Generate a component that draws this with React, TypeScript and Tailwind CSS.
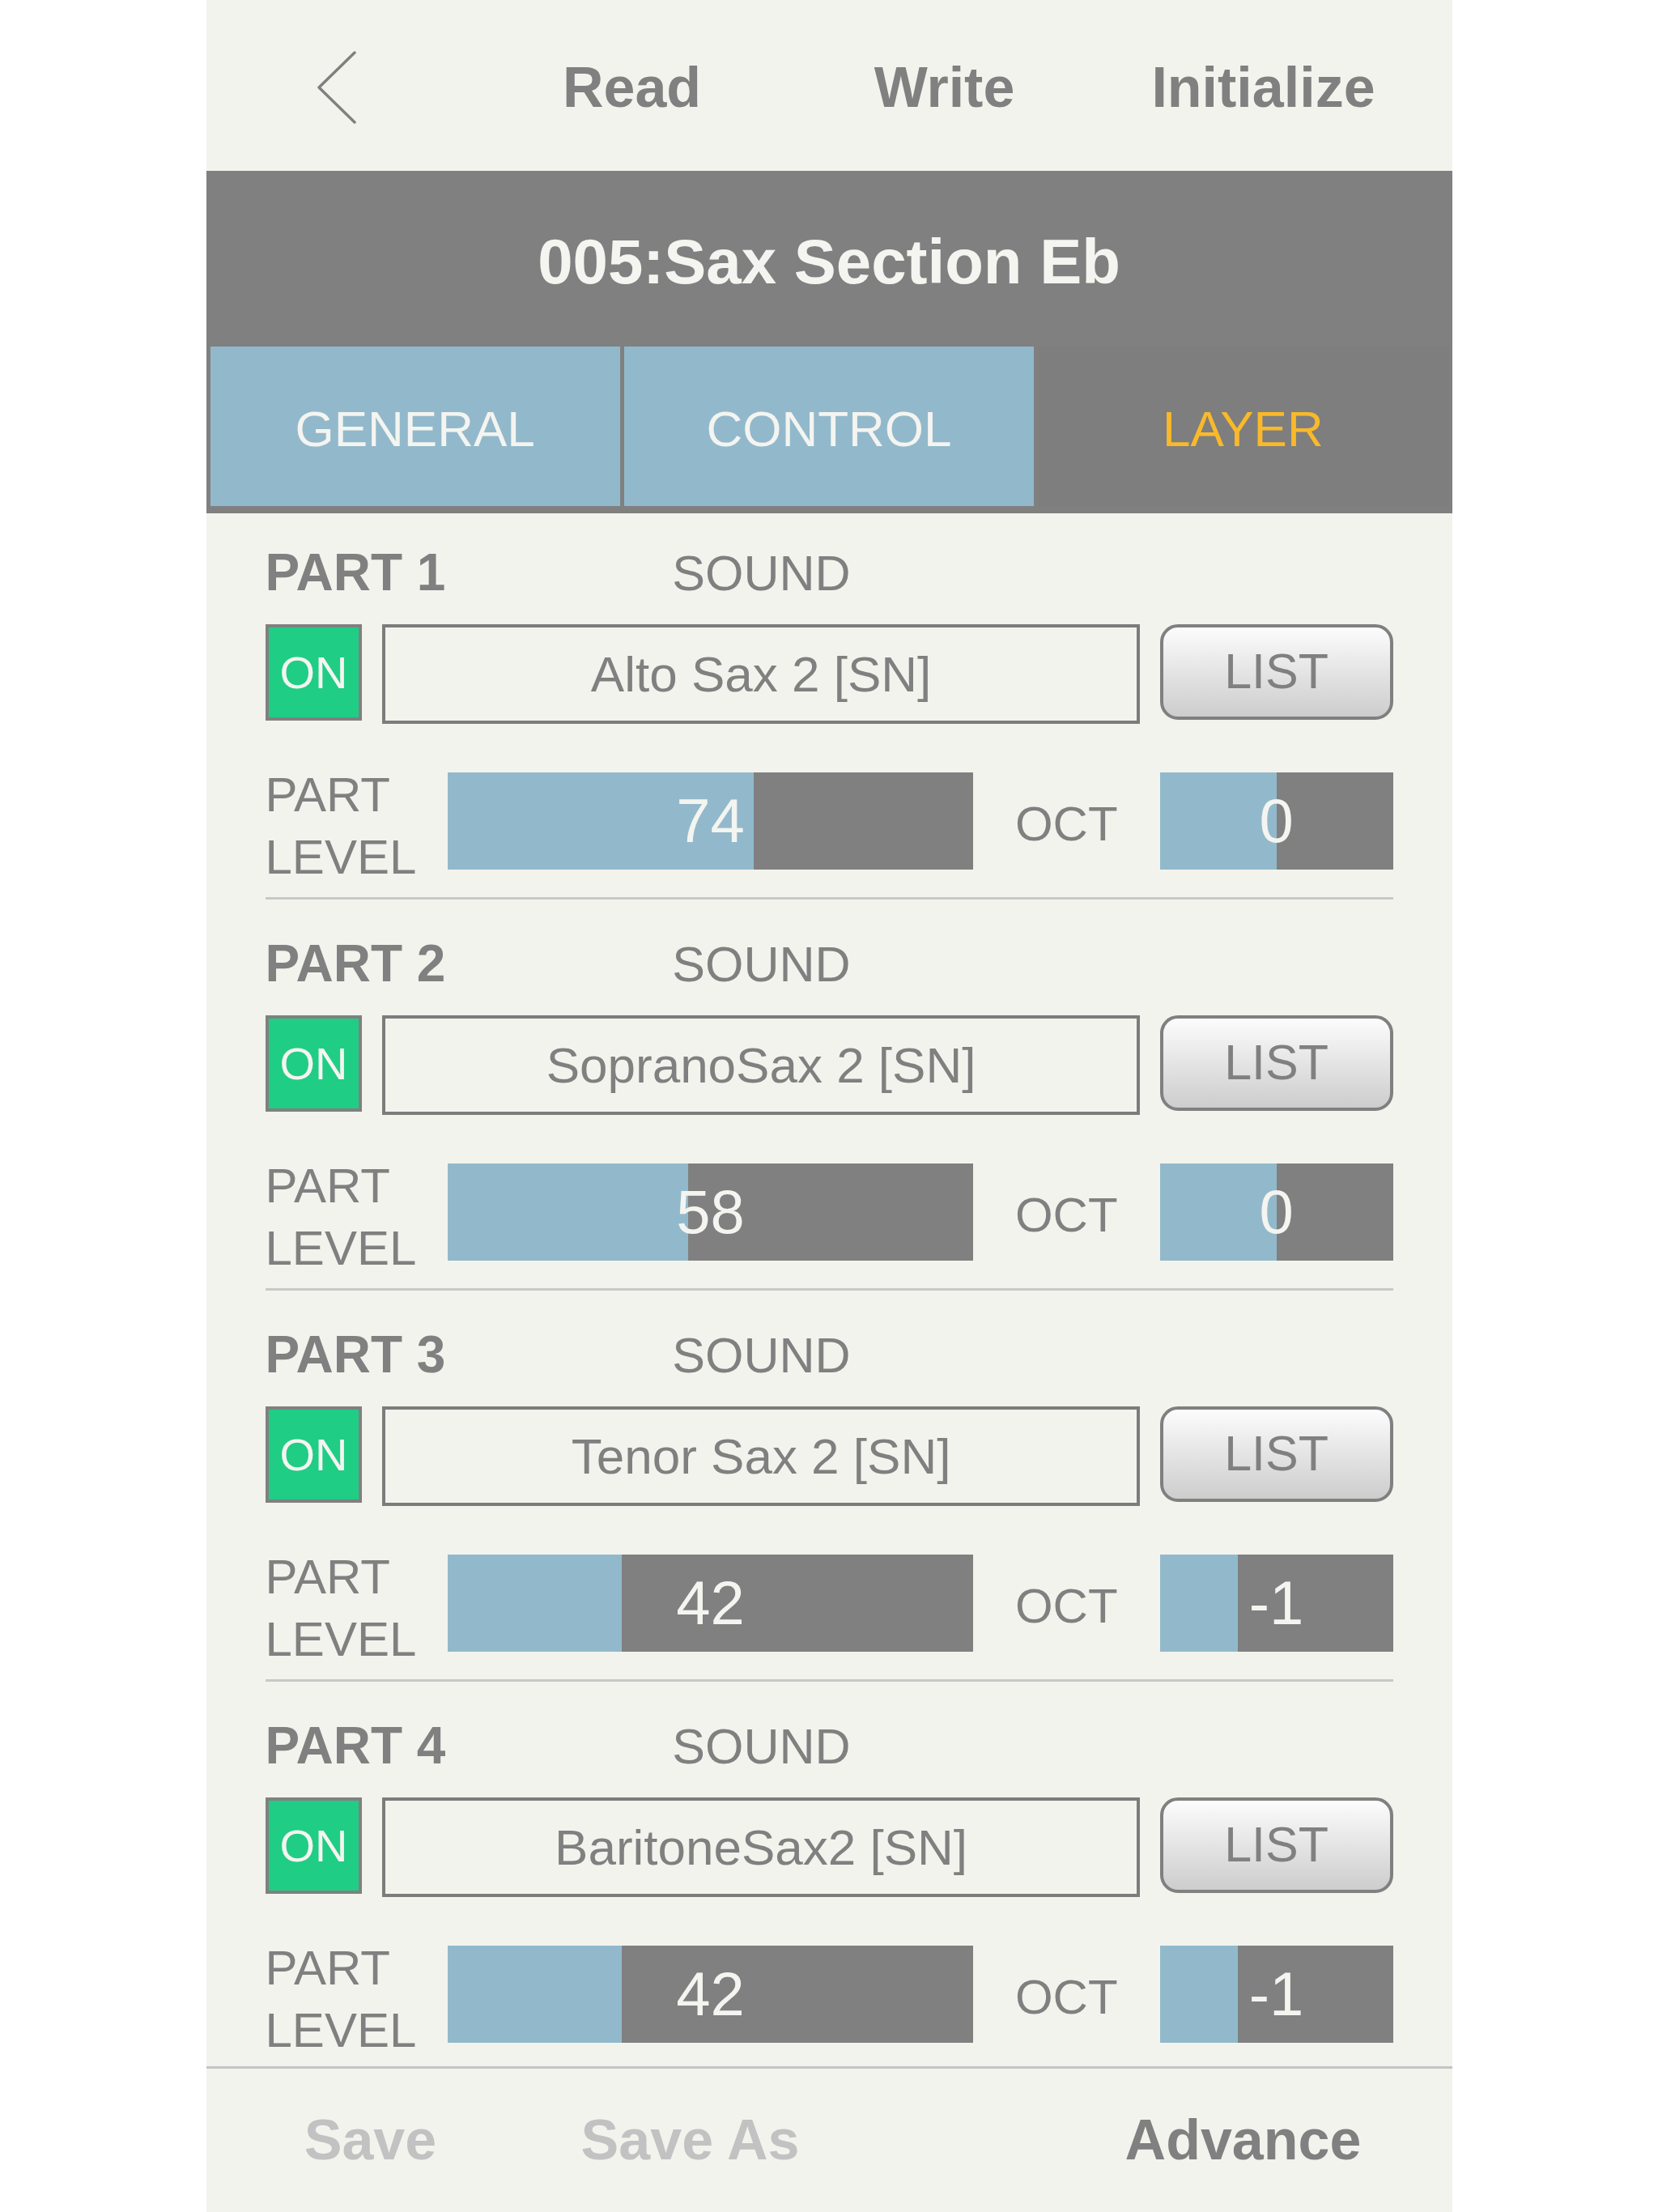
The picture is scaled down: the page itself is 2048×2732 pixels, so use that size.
import React from "react";

interface Part {
  n: number;
  name: string;
  level: number;
  oct: number;
}

const parts: Part[] = [
  { n: 1, name: "Alto Sax 2 [SN]", level: 74, oct: 0 },
  { n: 2, name: "SopranoSax 2 [SN]", level: 58, oct: 0 },
  { n: 3, name: "Tenor Sax 2 [SN]", level: 42, oct: -1 },
  { n: 4, name: "BaritoneSax2 [SN]", level: 42, oct: -1 },
];

function TopNav() {
  return (
    <div className="flex h-[211px] items-center pt-[5px] text-[70px] font-bold text-[#808080]">
      <div className="w-[376px] pl-[137px]">
        <svg width="48" height="90" viewBox="0 0 48 90" fill="none">
          <polyline points="46,2 2,45 46,88" stroke="#808080" strokeWidth="3.5" strokeLinecap="round" strokeLinejoin="round" />
        </svg>
      </div>
      <div className="w-[300px] text-center">Read</div>
      <div className="ml-[86px] w-[300px] text-center">Write</div>
      <div className="ml-[94px] w-[300px] text-center">Initialize</div>
    </div>
  );
}

function Tabs() {
  const tabs = ["GENERAL", "CONTROL", "LAYER"];
  return (
    <div className="grid h-[207px] grid-cols-3 gap-[5px] bg-[#808080] px-[5px] pt-[1px] pb-[9px]">
      {tabs.map((t) => {
        const active = t === "LAYER";
        return (
          <div
            key={t}
            className={
              active
                ? "flex items-center justify-center bg-[#7e7e7e] pt-[6px] text-[62px] text-[#f9b92a]"
                : "flex items-center justify-center bg-[#92b9cb] pt-[6px] text-[62px] text-[#f4f4f0]"
            }
          >
            {t}
          </div>
        );
      })}
    </div>
  );
}

function ValueBar({ width, fill, value }: { width: string; fill: number; value: number }) {
  return (
    <div className={`relative h-full bg-[#808080] ${width}`}>
      <div className="h-full bg-[#92b9cb]" style={{ width: `${fill * 100}%` }} />
      <div className="absolute inset-0 flex items-center justify-center text-[76px] text-[#f4f4f0]">
        {value}
      </div>
    </div>
  );
}

function PartBlock({ part, last }: { part: Part; last: boolean }) {
  return (
    <div className={last ? "" : "mb-[44px] border-b-[3px] border-[#c8c8c8] pb-[34px]"}>
      {/* label row */}
      <div className="flex h-[70px] items-baseline leading-[70px] text-[#808080]">
        <div className="w-[145px] whitespace-nowrap text-[64px] font-bold">PART {part.n}</div>
        <div className="w-[936px] text-center text-[61px]">SOUND</div>
      </div>

      {/* sound row */}
      <div className="mt-[29px] flex h-[123px] items-start gap-[25px]">
        <div className="flex h-[119px] w-[120px] items-center justify-center border-[4px] border-[#808080] bg-[#20cd85] text-[56px] leading-none text-[#f4f4f0]">
          ON
        </div>
        <div className="flex h-[123px] w-[936px] items-center justify-center border-[4px] border-[#7c7c7c] text-[62px] text-[#808080]">
          {part.name}
        </div>
        <div className="flex h-[118px] w-[288px] items-center justify-center rounded-[22px] border-[4px] border-[#808080] bg-linear-to-b from-[#fcfcfc] to-[#cdcdcd] text-[61px] text-[#808080]">
          LIST
        </div>
      </div>

      {/* level row */}
      <div className="mt-[60px] flex h-[120px] items-start">
        <div className="-mt-[11px] w-[226px] text-[60px] leading-[77px] text-[#808080]">
          PART
          <br />
          LEVEL
        </div>
        <ValueBar width="w-[649px]" fill={part.level / 127} value={part.level} />
        <div className="w-[231px] self-center pt-[8px] text-center text-[60px] text-[#808080]">OCT</div>
        <ValueBar width="w-[288px]" fill={(part.oct + 3) / 6} value={part.oct} />
      </div>
    </div>
  );
}

function Footer() {
  return (
    <div className="flex h-[177px] items-center text-[70px] font-bold">
      <div className="ml-[53px] w-[300px] text-center text-[#c2c2c2]">Save</div>
      <div className="ml-[95px] w-[300px] text-center text-[#c2c2c2]">Save As</div>
      <div className="ml-[383px] w-[300px] text-center text-[#808080]">Advance</div>
    </div>
  );
}

export default function App() {
  return (
    <div className="min-h-screen bg-white font-['Liberation_Sans',Arial,sans-serif]">
      <div className="mx-auto flex h-[2732px] w-[1539px] flex-col bg-[#f3f3ee]">
        <TopNav />

        <div className="flex h-[216px] items-center justify-center bg-[#808080] pt-[8px] text-[78px] font-bold text-[#f4f4f0]">
          005:Sax Section Eb
        </div>

        <Tabs />

        <div className="flex-1 overflow-hidden border-b-[3px] border-[#c4c4c4] px-[73px] pt-[38px]">
          {parts.map((p, i) => (
            <PartBlock key={p.n} part={p} last={i === parts.length - 1} />
          ))}
        </div>

        <Footer />
      </div>
    </div>
  );
}
